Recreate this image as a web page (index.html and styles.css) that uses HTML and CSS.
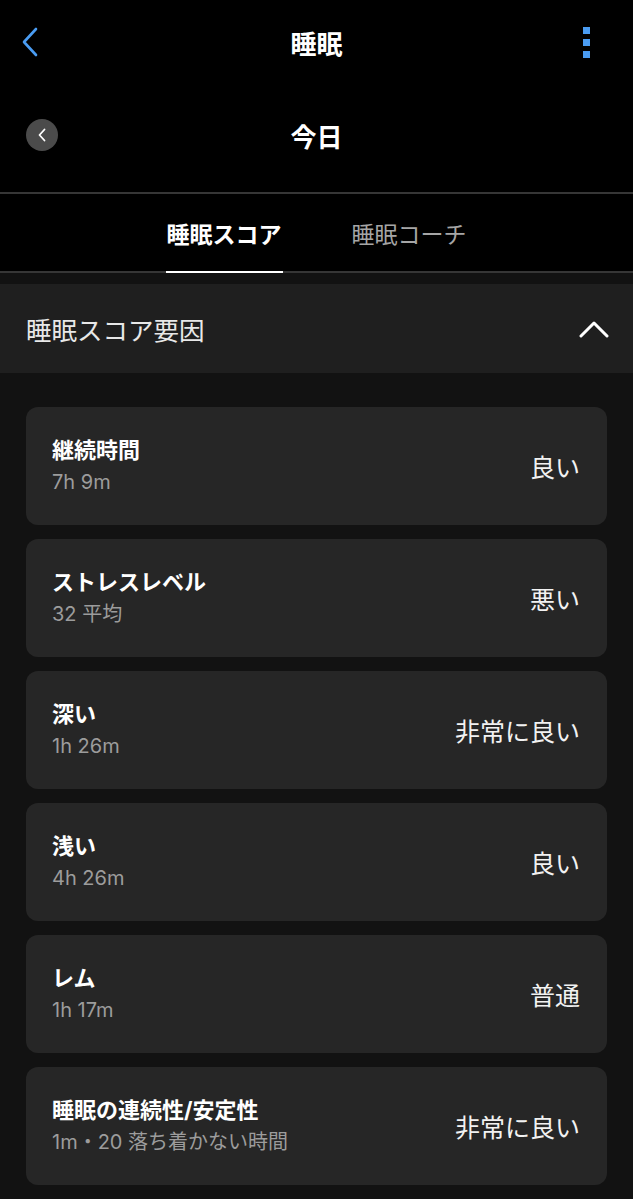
FILE: index.html
```html
<!DOCTYPE html>
<html lang="ja">
<head>
  <meta charset="UTF-8">
  <meta name="viewport" content="width=device-width, initial-scale=1.0">
  <title>睡眠</title>
  <link rel="stylesheet" href="styles.css">
</head>
<body>
  <div class="app">
    <header class="topbar">
      <button class="icon-btn back" aria-label="戻る">
        <svg width="18" height="30" viewBox="0 0 18 30">
          <path d="M15 2 L3 15 L15 28" fill="none" stroke="#4a9cf2" stroke-width="2.6" stroke-linecap="round" stroke-linejoin="round"/>
        </svg>
      </button>
      <h1 class="title">睡眠</h1>
      <button class="icon-btn kebab" aria-label="メニュー">
        <span></span><span></span><span></span>
      </button>
    </header>

    <div class="date-row">
      <button class="circle-btn" aria-label="前の日">
        <svg width="10" height="14" viewBox="0 0 10 14">
          <path d="M7.5 1.5 L2.5 7 L7.5 12.5" fill="none" stroke="#fff" stroke-width="1.8" stroke-linecap="round" stroke-linejoin="round"/>
        </svg>
      </button>
      <div class="date">今日</div>
    </div>

    <nav class="tabs">
      <div class="tab active">睡眠スコア</div>
      <div class="tab">睡眠コーチ</div>
    </nav>

    <section class="factors">
      <div class="factors-head">
        <span>睡眠スコア要因</span>
        <svg width="30" height="18" viewBox="0 0 30 18">
          <path d="M2 16 L15 3 L28 16" fill="none" stroke="#fff" stroke-width="3" stroke-linecap="round" stroke-linejoin="round"/>
        </svg>
      </div>

      <ul class="factor-list">
        <li class="factor">
          <div class="factor-text">
            <div class="factor-name">継続時間</div>
            <div class="factor-sub">7h 9m</div>
          </div>
          <div class="factor-value">良い</div>
        </li>
        <li class="factor">
          <div class="factor-text">
            <div class="factor-name">ストレスレベル</div>
            <div class="factor-sub">32 平均</div>
          </div>
          <div class="factor-value">悪い</div>
        </li>
        <li class="factor">
          <div class="factor-text">
            <div class="factor-name">深い</div>
            <div class="factor-sub">1h 26m</div>
          </div>
          <div class="factor-value">非常に良い</div>
        </li>
        <li class="factor">
          <div class="factor-text">
            <div class="factor-name">浅い</div>
            <div class="factor-sub">4h 26m</div>
          </div>
          <div class="factor-value">良い</div>
        </li>
        <li class="factor">
          <div class="factor-text">
            <div class="factor-name">レム</div>
            <div class="factor-sub">1h 17m</div>
          </div>
          <div class="factor-value">普通</div>
        </li>
        <li class="factor">
          <div class="factor-text">
            <div class="factor-name">睡眠の連続性/安定性</div>
            <div class="factor-sub">1m・20 落ち着かない時間</div>
          </div>
          <div class="factor-value">非常に良い</div>
        </li>
      </ul>
    </section>
  </div>
</body>
</html>
```

FILE: styles.css
```css
body {
  margin: 0;
  background-color: #000;
  color: #fff;
  font-family: "Inter", "Noto Sans CJK JP", sans-serif;
}

.app {
  width: 633px;
  min-height: 1199px;
  background-color: #121212;
}

button {
  background: none;
  border: none;
  padding: 0;
  cursor: pointer;
}

/* top bar */
.topbar {
  height: 84px;
  display: grid;
  grid-template-columns: 1fr auto 1fr;
  align-items: center;
  padding: 0 21px;
  background-color: #000;
}

.topbar .title {
  margin: 0;
  font-size: 26px;
  font-weight: 700;
  font-family: "Noto Sans CJK JP", sans-serif;
}

.icon-btn {
  display: flex;
  align-items: center;
}

.kebab {
  justify-self: end;
  flex-direction: column;
  gap: 5px;
  width: 18px;
  margin-right: 17px;
}

.kebab span {
  display: block;
  width: 7px;
  height: 7px;
  background-color: #4a9cf2;
}

/* date row */
.date-row {
  position: relative;
  height: 102px;
  padding-bottom: 6px;
  display: flex;
  align-items: center;
  justify-content: center;
  background-color: #000;
}

.circle-btn {
  position: absolute;
  left: 26px;
  top: 35px;
  width: 32px;
  height: 32px;
  border-radius: 50%;
  background-color: #4b4b4b;
  display: flex;
  align-items: center;
  justify-content: center;
}

.date {
  font-size: 26px;
  font-weight: 700;
}

/* tabs */
.tabs {
  height: 77px;
  display: flex;
  justify-content: center;
  gap: 68px;
  background-color: #000;
  border-top: 2px solid #363636;
  border-bottom: 2px solid #363636;
}

.tab {
  display: flex;
  align-items: center;
  padding: 0 1px;
  font-size: 23px;
  color: #a6a6a6;
  border-bottom: 2px solid transparent;
  margin-bottom: -2px;
}

.tab.active {
  color: #fff;
  font-weight: 700;
  border-bottom-color: #fff;
}

/* sleep score factors */
.factors {
  padding-top: 11px;
}

.factors-head {
  height: 89px;
  display: flex;
  align-items: center;
  justify-content: space-between;
  padding: 0 24px 0 26px;
  background-color: #1f1f1f;
  font-size: 25.5px;
  color: #e8e8e8;
}

.factor-list {
  list-style: none;
  margin: 0;
  padding: 34px 26px;
  display: flex;
  flex-direction: column;
  gap: 14px;
}

.factor {
  height: 118px;
  box-sizing: border-box;
  display: flex;
  align-items: center;
  justify-content: space-between;
  padding: 0 27px 0 26px;
  border-radius: 12px;
  background-color: #262626;
}

.factor-name {
  font-size: 22px;
  font-weight: 700;
  line-height: 32px;
}

.factor-sub {
  font-size: 20px;
  color: #9c9c9c;
  line-height: 32px;
}

.factor-value {
  font-size: 25px;
  color: #f2f2f2;
}
```
